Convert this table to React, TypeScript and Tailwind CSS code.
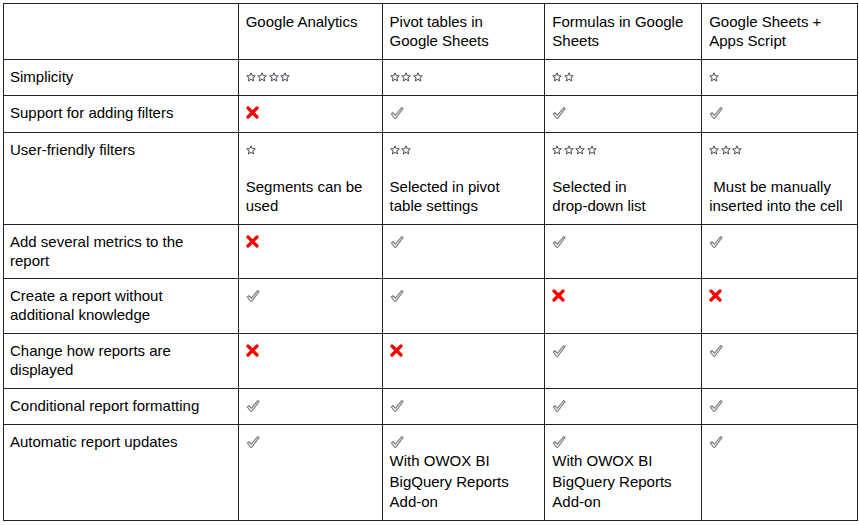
import { ReactNode } from "react"

type Mark = "x" | "v" | number

const Star = () => (
  <svg width="10" height="10" viewBox="0 0 10 10" className="inline-block mr-[1.5px]">
    <path
      d="M5 0.8 L6.2 3.7 L9.3 3.9 L6.9 5.9 L7.7 9 L5 7.3 L2.3 9 L3.1 5.9 L0.7 3.9 L3.8 3.7 Z"
      fill="#fff"
      stroke="#4a4a58"
      strokeWidth="1"
      strokeLinejoin="round"
    />
  </svg>
)

const Check = () => (
  <svg width="14" height="14" viewBox="0 0 13 13" className="inline-block">
    <path
      d="M1.2 7.4 L2.8 6.2 L4.9 8.6 L10.9 1.4 L12.1 2.4 L5.4 11.2 Q4.6 12 3.8 10.9 Z"
      fill="#fff"
      stroke="#7f7f88"
      strokeWidth="1.1"
      strokeLinejoin="round"
    />
  </svg>
)

const Cross = () => (
  <svg width="13" height="13" viewBox="0 0 13 13" className="inline-block">
    <path d="M2 2 L11 11 M11 2 L2 11" stroke="#ff0000" strokeWidth="3.2" strokeLinecap="round" />
  </svg>
)

function renderMark(m: Mark) {
  if (m === "x") return <Cross />
  if (m === "v") return <Check />
  return (
    <span className="inline-flex">
      {Array.from({ length: m }).map((_, i) => (
        <Star key={i} />
      ))}
    </span>
  )
}

interface Row {
  label: string
  height: string
  cells: { mark?: Mark; note?: ReactNode; gap?: boolean; tall?: boolean }[]
}

const headers = ["Google Analytics", "Pivot tables in Google Sheets", "Formulas in Google Sheets", "Google Sheets + Apps Script"]

const rows: Row[] = [
  { label: "Simplicity", height: "h-[36px]", cells: [{ mark: 4 }, { mark: 3 }, { mark: 2 }, { mark: 1 }] },
  { label: "Support for adding filters", height: "h-[37px]", cells: [{ mark: "x" }, { mark: "v" }, { mark: "v" }, { mark: "v" }] },
  {
    label: "User-friendly filters",
    height: "h-[92px]",
    cells: [
      { mark: 1, gap: true, note: <>Segments can be<br />used</> },
      { mark: 2, gap: true, note: <>Selected in pivot<br />table settings</> },
      { mark: 4, gap: true, note: <>Selected in<br />drop-down list</> },
      { mark: 3, gap: true, note: <>&nbsp;Must be manually<br />inserted into the cell</> },
    ],
  },
  { label: "Add several metrics to the report", height: "h-[54px]", cells: [{ mark: "x" }, { mark: "v" }, { mark: "v" }, { mark: "v" }] },
  { label: "Create a report without additional knowledge", height: "h-[55px]", cells: [{ mark: "v" }, { mark: "v" }, { mark: "x" }, { mark: "x" }] },
  { label: "Change how reports are displayed", height: "h-[55px]", cells: [{ mark: "x" }, { mark: "x" }, { mark: "v" }, { mark: "v" }] },
  { label: "Conditional report formatting", height: "h-[36px]", cells: [{ mark: "v" }, { mark: "v" }, { mark: "v" }, { mark: "v" }] },
  {
    label: "Automatic report updates",
    height: "h-[96px]",
    cells: [
      { mark: "v" },
      { mark: "v", tall: true, note: <>With OWOX BI<br />BigQuery Reports<br />Add-on</> },
      { mark: "v", tall: true, note: <>With OWOX BI<br />BigQuery Reports<br />Add-on</> },
      { mark: "v" },
    ],
  },
]

const widths = ["w-[235px]", "w-[144px]", "w-[163px]", "w-[157px]", "w-[156px]"]

export default function App() {
  return (
    <div className="w-[859px] h-[525px] bg-white p-[3px] text-black" style={{ fontFamily: '"Liberation Sans", Arial, sans-serif' }}>
      <div className="flex flex-col w-[855px] border-l border-t border-[#222] text-[15px] leading-[19px]">
        {/* header */}
        <div className="flex h-[56px]">
          <div className={`${widths[0]} border-r border-b border-[#222]`} />
          {headers.map((h, i) => (
            <div key={h} className={`${widths[i + 1]} border-r border-b border-[#222] pl-[7px] pr-[11px] pt-[8px]`}>
              {h}
            </div>
          ))}
        </div>
        {rows.map((r) => (
          <div key={r.label} className={`flex ${r.height}`}>
            <div className={`${widths[0]} border-r border-b border-[#222] pl-[6px] pr-[12px] pt-[7px]`}>{r.label}</div>
            {r.cells.map((c, i) => (
              <div key={i} className={`${widths[i + 1]} border-r border-b border-[#222] pl-[7px] pr-[8px] pt-[7px]`}>
                <div className="h-[19px] flex items-center">{c.mark !== undefined && renderMark(c.mark)}</div>
                {c.gap && <div className="h-[18px]" />}
                {c.note && <div className={`whitespace-nowrap ${c.tall ? "leading-[20.5px]" : ""}`}>{c.note}</div>}
              </div>
            ))}
          </div>
        ))}
      </div>
    </div>
  )
}
